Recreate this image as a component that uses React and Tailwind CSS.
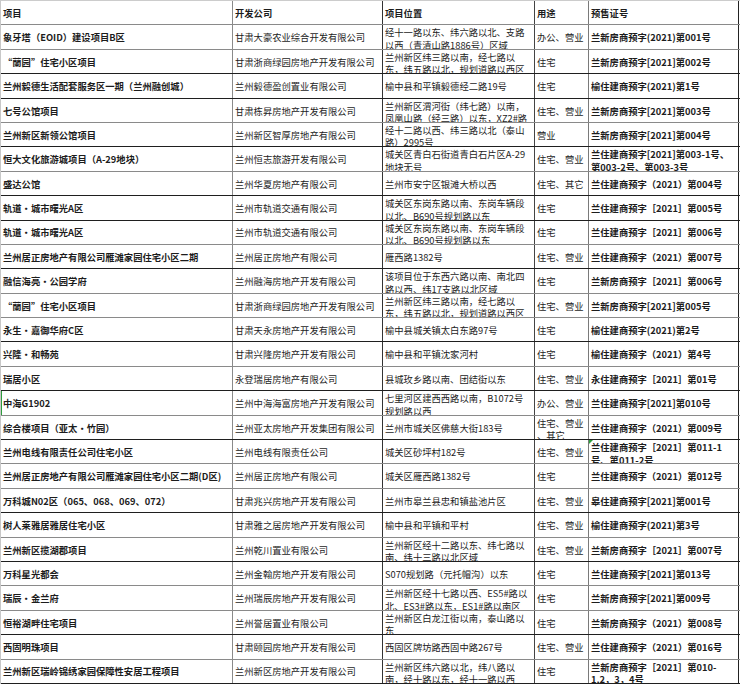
const rows = [
  ["象牙塔（EOID）建设项目B区", "甘肃大豪农业综合开发有限公司", "经十一路以东、纬六路以北、支路以西（青清山路1886号）区域", "办公、营业", "兰新房商预字(2021)第001号"],
  ["“蘭园”住宅小区项目", "甘肃浙商绿园房地产开发有限公司", "兰州新区纬三路以南，经七路以东，纬五路以北，规划道路以西区", "住宅", "兰新房商预字[2021]第002号"],
  ["兰州毅德生活配套服务区一期（兰州融创城）", "兰州毅德盈创置业有限公司", "榆中县和平镇毅德经二路19号", "住宅", "榆住建商预字(2021)第1号"],
  ["七号公馆项目", "甘肃栋昇房地产开发有限公司", "兰州新区渭河街（纬七路）以南，凤凰山路（经三路）以东，XZ2#路", "住宅、营业", "兰新房商预字[2021]第003号"],
  ["兰州新区新领公馆项目", "兰州新区智厚房地产有限公司", "经十二路以西、纬三路以北（泰山路）2995号", "营业", "兰新房商预字[2021]第004号"],
  ["恒大文化旅游城项目（A-29地块）", "兰州恒志旅游开发有限公司", "城关区青白石街道青白石片区A-29地块无号", "住宅、营业", "兰住建商预字[2021]第003-1号、第003-2号、第003-3号"],
  ["盛达公馆", "兰州华夏房地产有限公司", "兰州市安宁区银滩大桥以西", "住宅、其它", "兰住建商预字（2021）第004号"],
  ["轨道•城市曙光A区", "兰州市轨道交通有限公司", "城关区东岗东路以南、东岗车辆段以北、B690号规划路以东", "住宅", "兰住建商预字［2021］第005号"],
  ["轨道•城市曙光A区", "兰州市轨道交通有限公司", "城关区东岗东路以南、东岗车辆段以北、B690号规划路以东", "住宅", "兰住建商预字［2021］第006号"],
  ["兰州居正房地产有限公司雁滩家园住宅小区二期", "兰州居正房地产有限公司", "雁西路1382号", "住宅、营业", "兰住建商预字（2021）第007号"],
  ["融信海亮•公园学府", "兰州融海房地产开发有限公司", "该项目位于东西六路以南、南北四路以西、纬17支路以北区域", "住宅", "兰新房商预字［2021］第006号"],
  ["“蘭园”住宅小区项目", "甘肃浙商绿园房地产开发有限公司", "兰州新区纬三路以南，经七路以东，纬五路以北，规划道路以西区", "住宅、营业", "兰新房商预字[2021]第005号"],
  ["永生•嘉御华府C区", "甘肃天永房地产开发有限公司", "榆中县城关镇太白东路97号", "住宅", "榆住建商预字(2021)第2号"],
  ["兴隆•和畅苑", "甘肃兴隆房地产开发有限公司", "榆中县和平镇沈家河村", "住宅", "榆住建商预字（2021）第4号"],
  ["瑞居小区", "永登瑞居房地产有限公司", "县城玫乡路以南、团结街以东", "住宅、营业", "永住建商预字［2021］第01号"],
  ["中海G1902", "兰州中海海富房地产开发有限公司", "七里河区建西西路以南，B1072号规划路以西", "办公、营业", "兰住建商预字[2021]第010号"],
  ["综合楼项目（亚太•竹园）", "兰州亚太房地产开发集团有限公司", "兰州市城关区佛慈大街183号", "住宅、营业、其它", "兰住建商预字（2021）第009号"],
  ["兰州电线有限责任公司住宅小区", "兰州电线有限责任公司", "城关区砂坪村182号", "住宅、营业", "兰住建商预字［2021］第011-1号、第011-2号"],
  ["兰州居正房地产有限公司雁滩家园住宅小区二期(D区)", "兰州居正房地产有限公司", "城关区雁西路1382号", "住宅", "兰住建商预字（2021）第012号"],
  ["万科城N02区（065、068、069、072）", "甘肃兆兴房地产开发有限公司", "兰州市皋兰县忠和镇盐池片区", "住宅、营业", "皋住建商预字[2021]第001号"],
  ["树人莱雅居雅居住宅小区", "甘肃雅之居房地产开发有限公司", "榆中县和平镇和平村", "住宅、营业", "榆住建商预字(2021)第3号"],
  ["兰州新区揽湖郡项目", "兰州乾川置业有限公司", "兰州新区经十二路以东、纬七路以南、纬十三路以北区域", "住宅、营业", "兰新房商预字［2021］第007号"],
  ["万科星光都会", "兰州金翰房地产开发有限公司", "S070规划路（元托帽沟）以东", "住宅", "兰住建商预字[2021]第013号"],
  ["瑞辰•金兰府", "兰州瑞辰房地产开发有限公司", "兰州新区经十七路以西、ES5#路以北、ES3#路以东，ES1#路以南区", "住宅", "兰新房商预字[2021]第009号"],
  ["恒裕湖畔住宅项目", "兰州誉居置业有限公司", "兰州新区白龙江街以南，泰山路以东", "住宅", "兰新房商预字（2021）第008号"],
  ["西固明珠项目", "甘肃颐园房地产开发有限公司", "西固区牌坊路西固中路267号", "住宅、营业", "兰住建商预字（2021）第016号"],
  ["兰州新区瑞岭锦绣家园保障性安居工程项目", "兰州新区房地产开发有限公司", "兰州新区纬六路以北，纬八路以南，经十路以东，经十一路以西", "住宅", "兰新房商预字［2021］第010-1,2，3，4号"],
];

// which row lines came out dark in the screenshot, the rest are grey
const darkLines = [1, 2, 4, 6, 7, 9, 12, 14, 16, 19, 21, 24, 26];

const colCls = [
  "whitespace-nowrap font-bold border-r border-[#8a8a8a]",
  "whitespace-nowrap border-r border-[#333333]",
  "border-r border-[#444444]",
  "[line-break:anywhere] border-r border-[#7a7a7a]",
  "font-bold border-r border-[#222222]",
];

function Cell({ children, className, flag }) {
  return (
    <div
      className={`relative overflow-hidden px-[2px] pt-[1px] flex [align-items:safe_center] ${className}`}
    >
      {flag && (
        <span className="absolute left-0 top-0 w-0 h-0 border-t-[4px] border-r-[4px] border-t-[#2e9e3e] border-r-transparent" />
      )}
      <span className="min-w-0">{children}</span>
    </div>
  );
}

export default function App() {
  return (
    <div className="w-[740px] h-[685px] bg-white overflow-hidden font-['Noto_Sans_CJK_SC',sans-serif] text-[9.3px] leading-[12.5px] text-[#1c1c1c]">
      <div className="border-l border-t border-l-[#c8c8c8] border-t-[#cccccc]">
        <div className="grid grid-cols-[232px_150px_152px_54px_150px] h-[24.4px] border-b border-[#8a8a8a] font-bold">
          {["项目", "开发公司", "项目位置", "用途", "预售证号"].map((h, i) => (
            <Cell key={h} className={colCls[i] + " font-bold"}>
              {h}
            </Cell>
          ))}
        </div>
        {rows.map((r, idx) => (
          <div
            key={idx}
            className={`grid grid-cols-[232px_150px_152px_54px_150px] h-[24.4px] border-b ${
              darkLines.includes(idx) ? "border-[#1f1f1f]" : "border-[#8a8a8a]"
            } ${idx === 15 ? "shadow-[inset_1px_0_0_#2e9e3e]" : ""}`}
          >
            {r.map((c, i) => (
              <Cell key={i} className={colCls[i]} flag={idx === 17 && i === 4}>
                {c}
              </Cell>
            ))}
          </div>
        ))}
      </div>
    </div>
  );
}
